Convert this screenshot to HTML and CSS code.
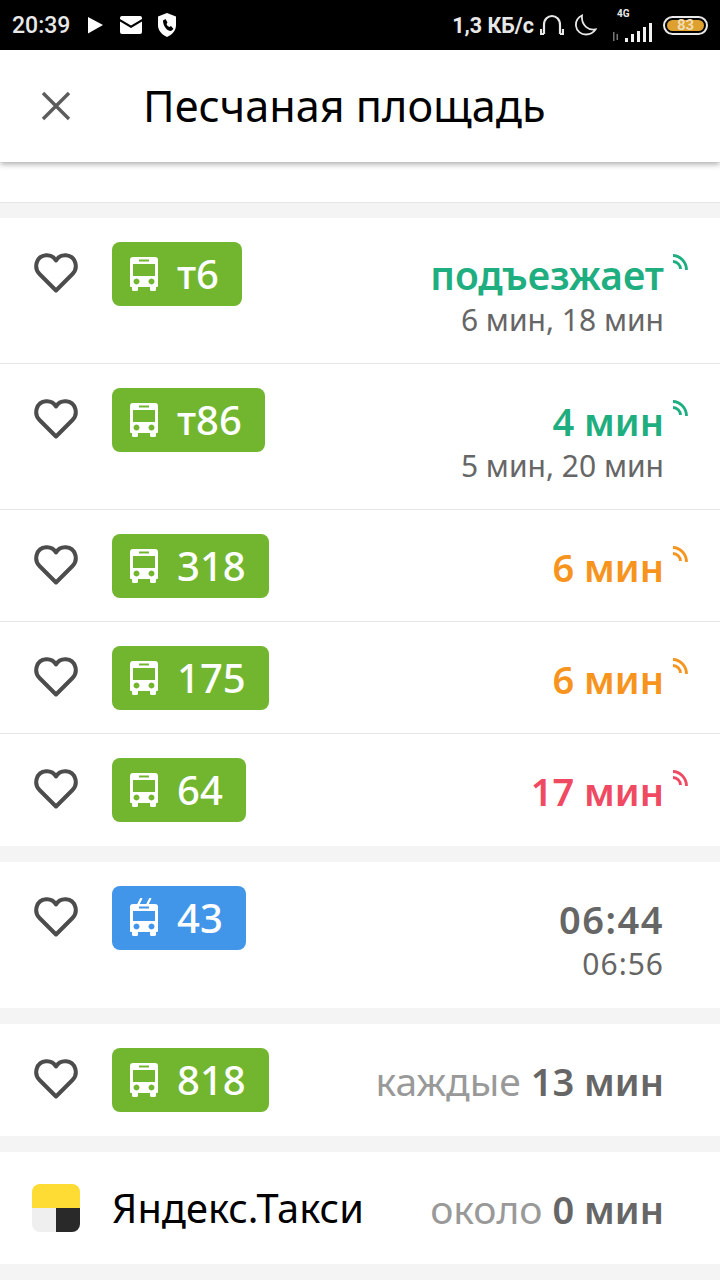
FILE: index.html
```html
<!DOCTYPE html>
<html>
<head>
  <title>Песчаная площадь</title>
  <meta charset="UTF-8">
  <meta name="viewport" content="width=device-width, initial-scale=1.0">
  <link rel="stylesheet" href="styles.css">
</head>
<body>
  <svg class="sprites" width="0" height="0">
    <symbol id="heart" viewBox="0 0 44 40">
      <path d="M22 37.5 L5.5 21 C-0.5 15 2 3 12 2.2 C16 1.9 20 4 22 7.5 C24 4 28 1.9 32 2.2 C42 3 44.500 15 38.500 21 Z" fill="none" stroke="#4c4c4c" stroke-width="4" stroke-linejoin="round"/>
    </symbol>
    <symbol id="bus" viewBox="0 0 28 34">
      <path fill="#fff" fill-rule="evenodd" d="M3 0H25Q28 0 28 3V29Q28 30 27 30H26V32.500Q26 34 24.500 34H21.500Q20 34 20 32.500V30H8V32.500Q8 34 6.500 34H3.500Q2 34 2 32.500V30H1Q0 30 0 29V3Q0 0 3 0ZM9 2.500V4.500H19V2.500ZM3 7V19H25V7ZM6.500 21.500A3 3 0 1 0 6.510 21.500ZM21.500 21.500A3 3 0 1 0 21.510 21.500Z"/>
    </symbol>
    <symbol id="trolley" viewBox="0 0 28 38">
      <path fill="#fff" fill-rule="evenodd" d="M3 6H25Q28 6 28 9V33Q28 34 27 34H26V36.500Q26 38 24.500 38H21.500Q20 38 20 36.500V34H8V36.500Q8 38 6.500 38H3.500Q2 38 2 36.500V34H1Q0 34 0 33V9Q0 6 3 6ZM9 8.500V10.500H19V8.500ZM3 13V23H25V13ZM6.500 25.500A3 3 0 1 0 6.510 25.500ZM21.500 25.500A3 3 0 1 0 21.510 25.500Z"/>
      <path d="M8 7L11.500 0M17 7L20.500 0" stroke="#fff" stroke-width="2.200"/>
    </symbol>
    <symbol id="signal" viewBox="0 0 18 18">
      <path d="M3 1.500C10 1.500 16.500 8 16.500 16M3 7.500C7 7.500 10.500 11 10.500 15" fill="none" stroke="currentColor" stroke-width="2.800"/>
    </symbol>
  </svg>

  <div class="status-bar">
    <div class="status-left">
      <span class="clock">20:39</span>
      <svg class="icon-play" width="17" height="18" viewBox="0 0 17 18"><path d="M1 1V17.500L16 9Z" fill="#fff"/></svg>
      <svg class="icon-mail" width="22" height="18" viewBox="0 0 22 18"><path fill="#fff" d="M2 0H20Q22 0 22 2V3L11 9.500L0 3V2Q0 0 2 0ZM0 5.500L11 12L22 5.500V16Q22 18 20 18H2Q0 18 0 16Z"/></svg>
      <svg class="icon-shield" width="18" height="24" viewBox="0 0 18 24"><path fill="#fff" d="M9 0L18 3.500V12C18 18 14 21.500 9 24C4 21.500 0 18 0 12V3.500Z"/><path fill="#000" d="M5 7.500L7.500 6L9.500 9.500L8.500 11C9 12.500 10 13.500 11.500 14L13 13L15.500 16L13 18C9 18 5 13 5 7.500Z"/></svg>
    </div>
    <div class="status-right">
      <span class="speed">1,3 КБ/с</span>
      <svg width="24" height="22" viewBox="0 0 24 22"><path d="M4 20V11C4 -1 20 -1 20 11V20M1 15V20H4M23 15V20H20" fill="none" stroke="#e8e8e8" stroke-width="2.200"/></svg>
      <svg class="icon-moon" width="23" height="22" viewBox="0 0 23 22"><path d="M8 1.500C4 3.500 1.500 7 2 12C2.500 17 7 20.500 12 20.500C16 20.500 19.500 18.500 21.500 15.500C15 16.500 7 12 8 1.500Z" fill="none" stroke="#e8e8e8" stroke-width="1.800"/></svg>
      <div class="net">
        <span class="net-label">4G</span>
        <svg width="40" height="19" viewBox="0 0 40 19"><path fill="#777" d="M1 9H2.500V18H1ZM4.500 11H6V17H4.500Z"/><path fill="#f2f2f2" d="M13 15H16V19H13ZM19 11H22V19H19ZM25 8H28V19H25ZM31 4H34V19H31ZM37 0H40V19H37Z"/></svg>
      </div>
      <div class="battery"><div class="battery-fill">83</div></div>
    </div>
  </div>

  <div class="header">
    <svg width="30" height="30" viewBox="0 0 30 30"><path d="M2 2L28 28M28 2L2 28" stroke="#5c5c5c" stroke-width="3.400"/></svg>
    <h1>Песчаная площадь</h1>
  </div>

  <div class="spacer"></div>

  <div class="section">
    <div class="row tall">
      <svg class="heart"><use href="#heart"/></svg>
      <div class="chip green"><svg class="bus-icon"><use href="#bus"/></svg>т6</div>
      <div class="times">
        <div class="main-time teal wide">подъезжает<svg class="signal"><use href="#signal"/></svg></div>
        <div class="sub-time">6 мин, 18 мин</div>
      </div>
    </div>
    <div class="row tall">
      <svg class="heart"><use href="#heart"/></svg>
      <div class="chip green"><svg class="bus-icon"><use href="#bus"/></svg>т86</div>
      <div class="times">
        <div class="main-time teal">4 мин<svg class="signal"><use href="#signal"/></svg></div>
        <div class="sub-time">5 мин, 20 мин</div>
      </div>
    </div>
    <div class="row">
      <svg class="heart"><use href="#heart"/></svg>
      <div class="chip green"><svg class="bus-icon"><use href="#bus"/></svg>318</div>
      <div class="times">
        <div class="main-time orange">6 мин<svg class="signal"><use href="#signal"/></svg></div>
      </div>
    </div>
    <div class="row">
      <svg class="heart"><use href="#heart"/></svg>
      <div class="chip green"><svg class="bus-icon"><use href="#bus"/></svg>175</div>
      <div class="times">
        <div class="main-time orange">6 мин<svg class="signal"><use href="#signal"/></svg></div>
      </div>
    </div>
    <div class="row">
      <svg class="heart"><use href="#heart"/></svg>
      <div class="chip green"><svg class="bus-icon"><use href="#bus"/></svg>64</div>
      <div class="times">
        <div class="main-time red">17 мин<svg class="signal"><use href="#signal"/></svg></div>
      </div>
    </div>
  </div>

  <div class="section">
    <div class="row tall">
      <svg class="heart"><use href="#heart"/></svg>
      <div class="chip blue"><svg class="trolley-icon"><use href="#trolley"/></svg>43</div>
      <div class="times digits">
        <div class="main-time gray">06:44</div>
        <div class="sub-time">06:56</div>
      </div>
    </div>
  </div>

  <div class="section">
    <div class="row">
      <svg class="heart"><use href="#heart"/></svg>
      <div class="chip green"><svg class="bus-icon"><use href="#bus"/></svg>818</div>
      <div class="times">
        <div class="main-time gray"><span class="prefix">каждые</span> 13 мин</div>
      </div>
    </div>
  </div>

  <div class="section">
    <div class="row taxi-row">
      <div class="taxi-logo">
        <div class="taxi-top"></div>
        <div class="taxi-light"></div>
        <div class="taxi-dark"></div>
      </div>
      <div class="taxi-name">Яндекс.Такси</div>
      <div class="times">
        <div class="main-time gray"><span class="prefix">около</span> 0 мин</div>
      </div>
    </div>
  </div>
</body>
</html>
```

FILE: styles.css
```css
body {
  font-family: "Noto Sans", "Open Sans", sans-serif;
  margin: 0;
  padding: 0;
  height: 1280px;
  overflow: hidden;
  background-color: #f4f4f4;
  color: #000;
}

.sprites {
  display: block;
}

.status-bar {
  display: flex;
  justify-content: space-between;
  align-items: center;
  height: 50px;
  padding: 0 12px;
  box-sizing: border-box;
  background-color: #000;
  color: #e8e8e8;
  font-family: Roboto, sans-serif;
  font-weight: 700;
}

.status-left, .status-right {
  display: flex;
  align-items: center;
}

.clock {
  font-size: 23px;
  font-weight: 500;
}

.icon-play {
  margin-left: 17px;
}

.icon-mail {
  margin-left: 16px;
}

.icon-shield {
  margin-left: 16px;
}

.speed {
  font-size: 21.5px;
  margin-right: 6px;
}

.icon-moon {
  margin-left: 10px;
}

.net {
  position: relative;
  width: 40px;
  height: 34px;
  margin-left: 15px;
  display: flex;
  align-items: flex-end;
}

.net-label {
  position: absolute;
  top: 0;
  left: 5px;
  font-size: 10px;
  font-weight: 700;
}

.battery {
  width: 45px;
  height: 19px;
  margin-left: 11px;
  box-sizing: border-box;
  border: 2px solid #e8e8e8;
  border-radius: 10px;
  padding: 2px;
}

.battery-fill {
  height: 11px;
  border-radius: 6px;
  background-color: #dea02f;
  color: #f0dcb0;
  font-size: 15px;
  line-height: 11px;
  text-align: center;
  font-weight: 700;
}

.header {
  position: relative;
  display: flex;
  align-items: center;
  height: 112px;
  padding-left: 41px;
  background-color: #fff;
  box-shadow: 0 2px 6px rgba(0, 0, 0, 0.35);
}

.header h1 {
  margin: 0 0 1px 72px;
  font-size: 43.2px;
  font-weight: 400;
}

.spacer {
  height: 40px;
  background-color: #fff;
  border-bottom: 1px solid #e6e6e6;
}

.section {
  margin-top: 16px;
  background-color: #fff;
}

.spacer + .section {
  margin-top: 15px;
}

.row {
  display: flex;
  align-items: flex-start;
  height: 112px;
  padding: 24px 56px 0 112px;
  box-sizing: border-box;
  position: relative;
  border-bottom: 1px solid #e6e6e6;
}

.row:last-child {
  border-bottom: none;
}

.row.tall {
  height: 146px;
}

.heart {
  position: absolute;
  left: 34px;
  top: 35px;
  width: 44px;
  height: 40px;
}

.chip {
  display: flex;
  align-items: center;
  height: 64px;
  padding: 0 23px 0 18px;
  border-radius: 8px;
  color: #fff;
  font-size: 40px;
  font-weight: 500;
  line-height: 62px;
}

.chip.green {
  background-color: #72b630;
}

.chip.blue {
  background-color: #4296ea;
}

.bus-icon {
  width: 28px;
  height: 34px;
  margin-right: 19px;
}

.trolley-icon {
  width: 28px;
  height: 38px;
  margin-right: 19px;
  margin-top: -2px;
}

.times {
  margin-left: auto;
  text-align: right;
}

.main-time {
  position: relative;
  font-size: 38px;
  font-weight: 600;
  line-height: 50px;
  margin-top: 8px;
}

.main-time.wide {
  font-size: 39px;
}

.sub-time {
  font-size: 30px;
  line-height: 44px;
  margin-top: -2px;
  color: #666;
}

.digits .main-time {
  letter-spacing: 1.5px;
}

.digits .sub-time {
  letter-spacing: 1px;
}

.signal {
  position: absolute;
  right: -24px;
  top: 4px;
  width: 18px;
  height: 18px;
}

.teal {
  color: #1fae80;
}

.orange {
  color: #f7941d;
}

.red {
  color: #f04a63;
}

.gray {
  color: #666;
}

.prefix {
  color: #999;
  font-size: 39px;
  font-weight: 400;
}

.taxi-row {
  padding-left: 32px;
}

.taxi-logo {
  display: grid;
  grid-template-columns: 24px 24px;
  grid-template-rows: 24px 24px;
  width: 48px;
  height: 48px;
  margin-top: 8px;
  border-radius: 8px;
  overflow: hidden;
}

.taxi-top {
  grid-column: 1 / 3;
  background-color: #ffdc33;
}

.taxi-light {
  background-color: #efefef;
}

.taxi-dark {
  background-color: #292929;
}

.taxi-name {
  margin-left: 32px;
  font-size: 39.8px;
  line-height: 50px;
  margin-top: 7px;
}
```
